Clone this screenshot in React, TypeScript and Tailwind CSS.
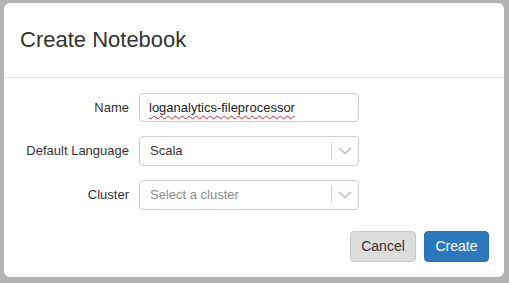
import React from "react";

const Chevron: React.FC = () => (
  <svg width="14" height="8" viewBox="0 0 14 8" className="text-[#bdbdbd]">
    <path d="M1 1l6 5.5L13 1" fill="none" stroke="currentColor" strokeWidth="1.6" />
  </svg>
);

const Select: React.FC<{ value: string; placeholder?: boolean }> = ({ value, placeholder }) => (
  <div className="flex items-center w-[220px] h-[30px] border border-[#cccccc] rounded-[4px] bg-white">
    <span className={`flex-1 pl-[10px] text-[13px] ${placeholder ? "text-[#8a8a8a]" : "text-[#333333]"}`}>
      {value}
    </span>
    <span className="w-px h-[18px] bg-[#d4d4d4]" />
    <span className="flex items-center justify-center w-[26px]">
      <Chevron />
    </span>
  </div>
);

const App: React.FC = () => {
  return (
    <div
      className="w-[509px] h-[283px] bg-[#b3b3b3] pt-[3px] pl-[4px] overflow-hidden"
      style={{ fontFamily: '"Liberation Sans", Arial, sans-serif' }}
    >
      <div className="w-[500px] h-[274px] bg-white rounded-[6px] flex flex-col">
        <div className="h-[75px] flex items-center px-[16px] border-b border-[#e5e5e5]">
          <h4 className="text-[22px] text-[#333333] leading-none">Create Notebook</h4>
        </div>
        <div className="flex flex-col gap-[14px] pt-[15px]">
          <div className="flex items-center">
            <label className="w-[125px] text-right text-[13px] text-[#333333]">Name</label>
            <div className="ml-[10px] flex items-center w-[220px] h-[29px] border border-[#cccccc] rounded-[4px] px-[9px]">
              <span className="text-[13px] text-[#222222] underline decoration-wavy decoration-[#e02020] decoration-1 underline-offset-[3px]">
                loganalytics-fileprocessor
              </span>
            </div>
          </div>
          <div className="flex items-center">
            <label className="w-[125px] text-right text-[13px] text-[#333333]">Default Language</label>
            <div className="ml-[10px]">
              <Select value="Scala" />
            </div>
          </div>
          <div className="flex items-center">
            <label className="w-[125px] text-right text-[13px] text-[#333333]">Cluster</label>
            <div className="ml-[10px]">
              <Select value="Select a cluster" placeholder />
            </div>
          </div>
        </div>
        <div className="flex justify-end gap-[8px] pr-[15px] pt-[21px]">
          <button className="w-[66px] h-[31px] bg-[#dddddd] border border-[#c8c8c8] rounded-[4px] text-[14px] text-[#333333]">
            Cancel
          </button>
          <button className="w-[65px] h-[31px] bg-[#2b78bd] border border-[#2a6fae] rounded-[4px] text-[14px] text-white">
            Create
          </button>
        </div>
      </div>
    </div>
  );
};

export default App;
